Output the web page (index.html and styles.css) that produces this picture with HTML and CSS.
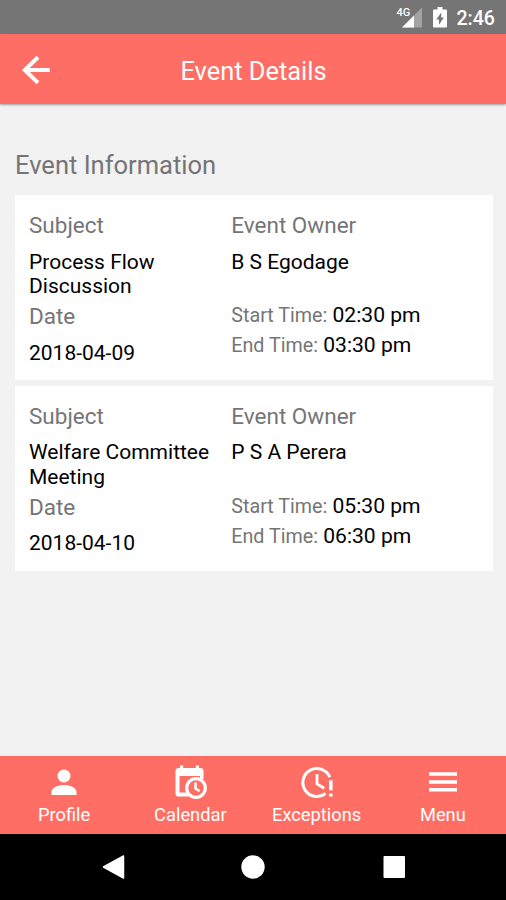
FILE: index.html
```html
<!DOCTYPE html>
<html lang="en">
<head>
<meta charset="utf-8">
<title>Event Details</title>
<link rel="stylesheet" href="styles.css">
</head>
<body>
<div class="screen">
  <div class="status">
    <svg class="signal" width="28" height="24" viewBox="0 0 28 24"><path d="M26 3.500v20H6z" fill="#a3a3a3"/><path d="M18 11.500v12H6z" fill="#fff"/><text x="0.5" y="12" class="net">4G</text></svg>
    <svg class="battery" width="14" height="22" viewBox="0 0 14 22"><path d="M4.5 0h5v2.500H13q1 0 1 1V19.500q0 1-1 1H1q-1 0-1-1V3.500q0-1 1-1h3.500z" fill="#fff"/><path d="M8.200 5.500v5h2.700L6 17.700v-5.300H3.300z" fill="#757575"/></svg>
    <span class="clock">2:46</span>
  </div>
  <header class="appbar">
    <svg class="back" width="36" height="36" viewBox="0 0 24 24"><path d="M21.100 12H4.500M13.300 3.500L4.500 12l8.800 8.500" fill="none" stroke="#fff" stroke-width="2.600"/></svg>
    <h1 class="title">Event Details</h1>
  </header>
  <main class="content">
    <h2 class="section">Event Information</h2>
    <article class="card">
      <div><div class="label">Subject</div><div class="value subject">Process Flow Discussion</div></div>
      <div><div class="label">Event Owner</div><div class="value">B S Egodage</div></div>
      <div><div class="label">Date</div><div class="value">2018-04-09</div></div>
      <div class="times"><div><span class="key">Start Time:</span> 02:30 pm</div><div><span class="key">End Time:</span> 03:30 pm</div></div>
    </article>
    <article class="card">
      <div><div class="label">Subject</div><div class="value subject">Welfare Committee Meeting</div></div>
      <div><div class="label">Event Owner</div><div class="value">P S A Perera</div></div>
      <div><div class="label">Date</div><div class="value">2018-04-10</div></div>
      <div class="times"><div><span class="key">Start Time:</span> 05:30 pm</div><div><span class="key">End Time:</span> 06:30 pm</div></div>
    </article>
  </main>
  <nav class="tabs">
    <div class="tab">
      <svg width="36" height="36" viewBox="0 0 36 36" fill="#fff"><circle cx="18" cy="11" r="6.500"/><path d="M5.500 30v-3c0-4.500 7-7 12.500-7s12.500 2.500 12.500 7v3z"/></svg>
      <span>Profile</span>
    </div>
    <div class="tab">
      <svg width="36" height="36" viewBox="0 0 36 36"><path d="M8 .5h3.200V3h12.600V.5H27V3h1.500q3 0 3 3v8H28v-3H7.500V27.500H15l2 4H6q-2.500 0-2.500-3V6q0-3 3-3H8z" fill="#fff"/><circle cx="24" cy="23" r="9.300" fill="#ff6e65" stroke="#fff" stroke-width="3.200"/><path d="M23.500 17.500v6l4.200 2.600" fill="none" stroke="#fff" stroke-width="2.500"/></svg>
      <span>Calendar</span>
    </div>
    <div class="tab">
      <svg width="36" height="36" viewBox="0 0 36 36" fill="none" stroke="#fff"><path d="M30.800 12.100A14 14 0 1 0 26.500 28.500" stroke-width="3"/><path d="M18 9v10l7.200 4.300" stroke-width="2.800"/><path d="M31.800 15.200v10M31.800 28.400v3.200" stroke-width="3.500"/></svg>
      <span>Exceptions</span>
    </div>
    <div class="tab">
      <svg width="36" height="36" viewBox="0 0 36 36"><path d="M4 9h28M4 17h28M4 24.700h28" stroke="#fff" stroke-width="3.600"/></svg>
      <span>Menu</span>
    </div>
  </nav>
  <div class="sysnav">
    <svg width="24" height="26" viewBox="0 0 24 26"><path d="M2.500 13L22.500 2v22z" fill="#fff" stroke="#fff" stroke-width="1.500" stroke-linejoin="round"/></svg>
    <svg width="24" height="26" viewBox="0 0 24 26"><circle cx="12" cy="13" r="11.700" fill="#fff"/></svg>
    <svg width="24" height="26" viewBox="0 0 24 26"><rect x="1.500" y="2" width="21.500" height="22" rx="1" fill="#fff"/></svg>
  </div>
</div>
</body>
</html>
```

FILE: styles.css
```css
* { box-sizing: border-box; }
body { margin: 0; font-family: Roboto, sans-serif; }
svg { display: block; }
.screen { width: 506px; height: 900px; display: flex; flex-direction: column; background: #f2f2f2; overflow: hidden; }
.status { height: 34px; flex: none; display: flex; justify-content: flex-end; align-items: flex-start; background: #757575; color: #fff; padding-right: 11px; }
.signal { margin: 4px 9px 0 0; }
.net { font: 500 11px Roboto, sans-serif; fill: #fff; }
.battery { margin: 7px 9px 0 0; }
.clock { font-size: 19.600px; font-weight: 500; line-height: 24px; margin-top: 7px; }
.appbar { height: 70px; flex: none; display: grid; grid-template-columns: 60px 1fr 60px; align-items: center; background: #ff6e65; color: #fff; box-shadow: 0 1px 2px rgba(0, 0, 0, .35); }
.back { margin: 1px 0 0 18px; }
.title { margin: 4px 0 0 1px; text-align: center; font-size: 25.400px; font-weight: 400; line-height: 30px; }
.content { flex: 1; padding: 45px 13px 0 15px; }
.section { margin: 0 0 14px; color: #757575; font-size: 25.500px; font-weight: 400; line-height: 32px; }
.card { display: grid; grid-template-columns: 202.300px 1fr; row-gap: 4.300px; align-content: start; height: 185px; margin-bottom: 5.600px; padding: 17.300px 14px 0; background: #fff; color: #000; }
.label { color: #757575; font-size: 22.500px; line-height: 26px; margin-bottom: 11.500px; }
.value { font-size: 21px; line-height: 24.600px; }
.subject { width: 190px; height: 49.200px; }
.times { font-size: 21.100px; line-height: 29px; margin-top: -3px; }
.key { color: #757575; font-size: 19.700px; }
.tabs { height: 77.500px; flex: none; display: grid; grid-template-columns: repeat(4, 1fr); background: #ff6e65; color: #fff; padding-left: 1px; }
.tab { display: flex; flex-direction: column; align-items: center; padding-top: 9px; font-size: 18.300px; line-height: 22px; }
.tab span { margin-top: 3px; }
.sysnav { height: 66.500px; flex: none; display: flex; justify-content: center; gap: 116.500px; align-items: center; background: #000; }
```
